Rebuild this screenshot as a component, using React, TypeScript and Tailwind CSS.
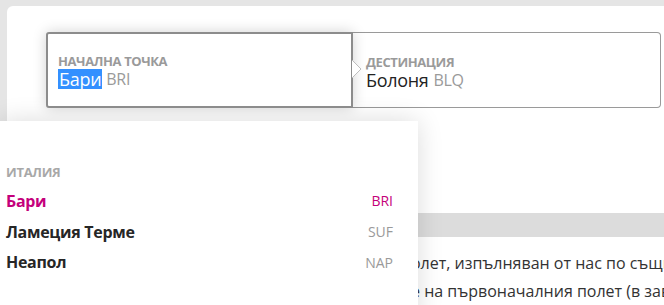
import React from "react";

const font = { fontFamily: '"Open Sans", "Noto Sans", sans-serif' };

export default function App() {
  return (
    <div className="relative w-[664px] h-[305px] overflow-hidden bg-[#e5e5e5]" style={font}>
      <div className="flex flex-col">
        <div className="pt-[6px] pl-[7px]">
          <div className="h-[207px] rounded-tl-[6px] bg-white pt-[26px] pl-[39px] pr-[3px]">
            <div className="flex h-[76px]">
              <div className="relative z-10 flex w-[307px] flex-col justify-center rounded-l-[3px] border-2 border-[#8c8c8c] bg-white pl-[10px] pt-[2px] shadow-[0_0_14px_rgba(0,0,0,0.18)]">
                <div className="text-[13px] font-bold leading-[15px] tracking-[-0.4px] text-[#9a9a9a]">НАЧАЛНА ТОЧКА</div>
                <div className="flex items-center text-[18px] leading-[20px]">
                  <span className="bg-[#3390ff] px-[1px] text-white tracking-[-0.3px]">Бари</span>
                  <span className="ml-[4px] text-[16px] text-[#9a9a9a] tracking-[-0.3px]">BRI</span>
                </div>
                <svg className="absolute right-[-11px] top-[26px]" width="10" height="18" viewBox="0 0 10 18">
                  <path d="M0 0 L9 9 L0 18 Z" fill="#ffffff" />
                  <path d="M0 0 L9 9 L0 18" fill="none" stroke="#bdbdbd" strokeWidth="1" />
                </svg>
              </div>
              <div className="flex flex-1 flex-col justify-center rounded-r-[4px] border border-l-0 border-[#9a9a9a] pl-[13px] pt-[4px]">
                <div className="text-[13px] font-bold leading-[15px] tracking-[-0.4px] text-[#9a9a9a]">ДЕСТИНАЦИЯ</div>
                <div className="flex items-center text-[18px] leading-[20px]">
                  <span className="text-[#222] tracking-[-0.3px]">Болоня</span>
                  <span className="ml-[5px] text-[16px] text-[#9a9a9a] tracking-[-0.3px]">BLQ</span>
                </div>
              </div>
            </div>
          </div>
        </div>
        <div className="h-[24px] bg-[#dcdcdc]" />
        <div className="h-[80px] bg-white pt-[12px] text-[16px] leading-[28px] text-[#333] whitespace-nowrap">
          <div className="pl-[401px]">полет, изпълняван от нас по същия маршрут</div>
          <div className="pl-[411px]">е на първоначалния полет (в зависимост</div>
        </div>
      </div>

      <div className="absolute left-0 top-[121px] h-[200px] w-[418px] bg-white shadow-[0_0_24px_rgba(0,0,0,0.14)]">
        <div className="pl-[6px] pr-[25px] pt-[43px]">
          <div className="text-[13px] font-bold leading-[16px] tracking-[-0.3px] text-[#a8a8a8]">ИТАЛИЯ</div>
          <div className="mt-[5px] flex flex-col">
            <div className="flex h-[31px] items-center justify-between">
              <span className="text-[16px] font-bold tracking-[-0.3px] text-[#c4007b]">Бари</span>
              <span className="text-[14px] text-[#c4007b]">BRI</span>
            </div>
            <div className="flex h-[31px] items-center justify-between">
              <span className="text-[16px] font-bold tracking-[-0.3px] text-[#262626]">Ламеция Терме</span>
              <span className="text-[14px] text-[#9a9a9a]">SUF</span>
            </div>
            <div className="flex h-[30px] items-center justify-between">
              <span className="text-[16px] font-bold tracking-[-0.3px] text-[#262626]">Неапол</span>
              <span className="text-[14px] text-[#9a9a9a]">NAP</span>
            </div>
          </div>
        </div>
      </div>
    </div>
  );
}
